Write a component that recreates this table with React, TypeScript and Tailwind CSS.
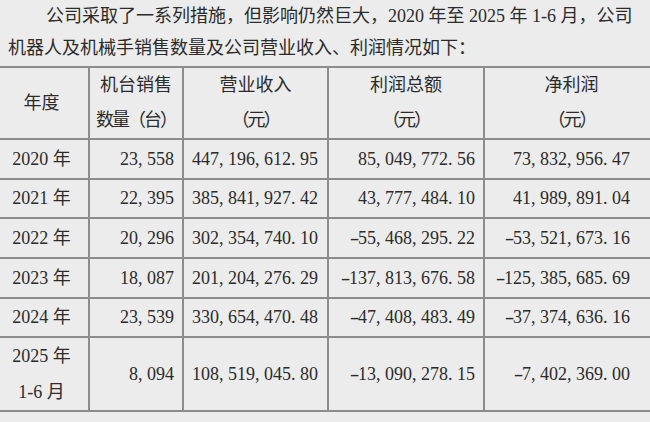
import React from "react";

const rows: [string, string, string, string, string][] = [
  ["2020 年", "23,558", "447,196,612.95", "85,049,772.56", "73,832,956.47"],
  ["2021 年", "22,395", "385,841,927.42", "43,777,484.10", "41,989,891.04"],
  ["2022 年", "20,296", "302,354,740.10", "-55,468,295.22", "-53,521,673.16"],
  ["2023 年", "18,087", "201,204,276.29", "-137,813,676.58", "-125,385,685.69"],
  ["2024 年", "23,539", "330,654,470.48", "-47,408,483.49", "-37,374,636.16"],
];

function Num({ v }: { v: string }) {
  return (
    <span className="whitespace-nowrap">
      {v.split("").map((c, i) =>
        c === "-" ? (
          <span key={i} className="inline-block w-[9px] text-center scale-x-[1.6] translate-x-[1px]">
            {c}
          </span>
        ) : c === "," || c === "." ? (
          <span key={i} className="inline-block w-[9px] text-left">
            {c}
          </span>
        ) : (
          <span key={i}>{c}</span>
        )
      )}
    </span>
  );
}

const cell = "border-2 border-[#8c8c8c] p-0";

export default function App() {
  return (
    <div
      className="w-[650px] h-[422px] overflow-hidden bg-[#ececec] text-[#2b2b2b] text-[18px]"
      style={{ fontFamily: "'Liberation Serif', 'Noto Sans CJK SC', serif" }}
    >
      <p className="px-[8px] leading-[32px] indent-[38px] whitespace-nowrap">
        公司采取了一系列措施，但影响仍然巨大，2020 年至 2025 年 1-6 月，公司
        <br />
        机器人及机械手销售数量及公司营业收入、利润情况如下：
      </p>
      <table className="mt-[2px] ml-[-7px] border-collapse table-fixed w-[665px]">
        <colgroup>
          <col className="w-[95px]" />
          <col className="w-[94px]" />
          <col className="w-[145px]" />
          <col className="w-[156px]" />
          <col className="w-[175px]" />
        </colgroup>
        <thead>
          <tr className="h-[72px]">
            <th className={`${cell} font-normal text-center`}>年度</th>
            <th className={`${cell} font-normal text-center leading-[35px] whitespace-nowrap`}>
              机台销售
              <br />
              <span className="tracking-[-2px]">数量（台）</span>
            </th>
            <th className={`${cell} font-normal text-center leading-[35px]`}>
              营业收入
              <br />
              <span className="tracking-[-2px]">（元）</span>
            </th>
            <th className={`${cell} font-normal text-center leading-[35px]`}>
              利润总额
              <br />
              <span className="tracking-[-2px]">（元）</span>
            </th>
            <th className={`${cell} font-normal text-center leading-[35px]`}>
              净利润
              <br />
              <span className="tracking-[-2px]">（元）</span>
            </th>
          </tr>
        </thead>
        <tbody>
          {rows.map((r, i) => (
            <tr key={r[0]} className={i === 1 || i === 4 ? "h-[39px]" : "h-[40px]"}>
              <td className={`${cell} text-center whitespace-nowrap`}>{r[0]}</td>
              <td className={`${cell} text-right pr-[8px]`}>
                <Num v={r[1]} />
              </td>
              <td className={`${cell} text-right pr-[9px]`}>
                <Num v={r[2]} />
              </td>
              <td className={`${cell} text-right pr-[8px]`}>
                <Num v={r[3]} />
              </td>
              <td className={`${cell} text-right pr-[28px]`}>
                <Num v={r[4]} />
              </td>
            </tr>
          ))}
          <tr className="h-[72px]">
            <td className={`${cell} text-center leading-[36px] whitespace-nowrap`}>
              2025 年
              <br />
              1-6 月
            </td>
            <td className={`${cell} text-right pr-[8px]`}>
              <Num v="8,094" />
            </td>
            <td className={`${cell} text-right pr-[9px]`}>
              <Num v="108,519,045.80" />
            </td>
            <td className={`${cell} text-right pr-[8px]`}>
              <Num v="-13,090,278.15" />
            </td>
            <td className={`${cell} text-right pr-[28px]`}>
              <Num v="-7,402,369.00" />
            </td>
          </tr>
        </tbody>
      </table>
    </div>
  );
}
